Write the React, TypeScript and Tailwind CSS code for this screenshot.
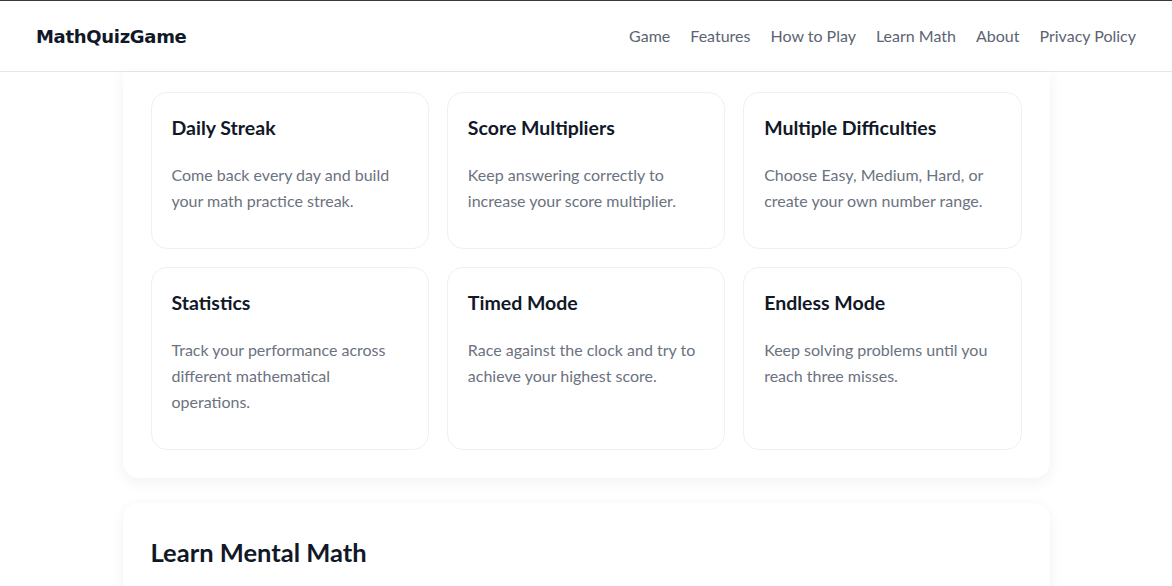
import React from "react";

const features = [
  { title: "Daily Streak", text: "Come back every day and build your math practice streak." },
  { title: "Score Multipliers", text: "Keep answering correctly to increase your score multiplier." },
  { title: "Multiple Difficulties", text: "Choose Easy, Medium, Hard, or create your own number range." },
  { title: "Statistics", text: "Track your performance across different mathematical operations." },
  { title: "Timed Mode", text: "Race against the clock and try to achieve your highest score." },
  { title: "Endless Mode", text: "Keep solving problems until you reach three misses." },
];

const navLinks = ["Game", "Features", "How to Play", "Learn Math", "About", "Privacy Policy"];

export default function App() {
  return (
    <div className="h-[586px] overflow-hidden bg-white font-['Lato','Noto_Sans',sans-serif] border-t border-[#3a3a3a]">
      {/* Header */}
      <header className="h-[71px] bg-white border-b border-[#e5e7eb] flex items-center justify-between px-9">
        <div className="font-['DejaVu_Sans',sans-serif] font-bold text-[18px] text-[#111827] tracking-[-0.3px]">
          MathQuizGame
        </div>
        <nav className="flex items-center gap-5 text-[16px] text-[#5b6472]">
          {navLinks.map((l) => (
            <a key={l} href="#" className="hover:text-gray-900">
              {l}
            </a>
          ))}
        </nav>
      </header>

      {/* Features section (scrolled) */}
      <section className="w-[927px] mx-auto bg-white rounded-b-2xl shadow-[0_4px_16px_rgba(0,0,0,0.06)] px-7 pt-5 pb-7">
        <div className="grid grid-cols-3 gap-[18px]">
          {features.map((f) => (
            <div key={f.title} className="border border-[#eef0f2] rounded-2xl px-5 pt-5 pb-[34px]">
              <h3 className="text-[19.5px] leading-7 font-bold text-[#111827] translate-y-px">{f.title}</h3>
              <p className="mt-[21px] text-[16px] leading-[26px] text-[#6b7280]">{f.text}</p>
            </div>
          ))}
        </div>
      </section>

      {/* Learn Mental Math */}
      <section className="w-[927px] mx-auto mt-[25px] bg-white rounded-2xl shadow-[0_4px_16px_rgba(0,0,0,0.06)] px-7 pt-[33px] pb-8">
        <h2 className="text-[25.5px] leading-8 font-bold text-[#111827]">Learn Mental Math</h2>
      </section>
    </div>
  );
}
